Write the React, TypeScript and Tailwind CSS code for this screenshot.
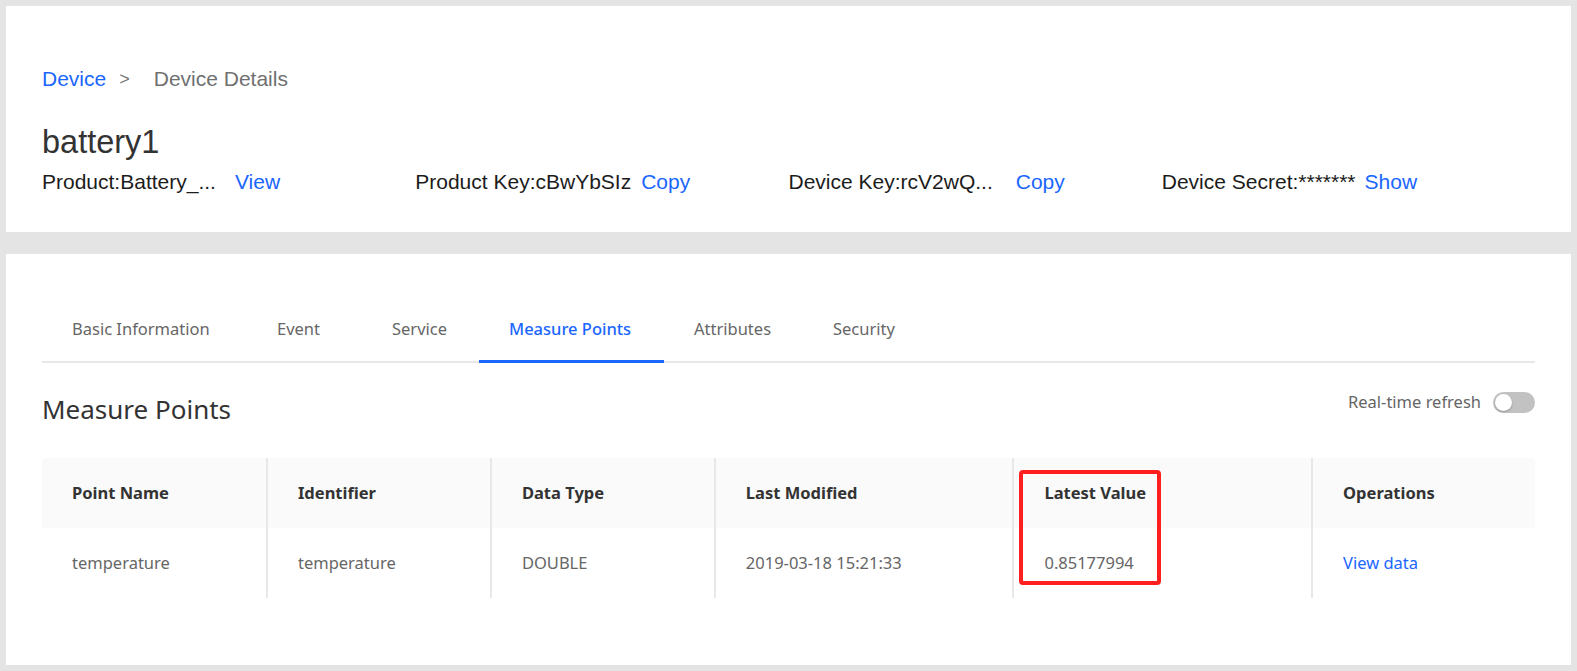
import { ReactElement } from 'react'

const tabs = [
	{ name: 'Basic Information', width: 'w-[205px]' },
	{ name: 'Event', width: 'w-[115px]' },
	{ name: 'Service', width: 'w-[117px]' },
	{ name: 'Measure Points', width: 'w-[185px]' },
	{ name: 'Attributes', width: 'w-[139px]' },
	{ name: 'Security', width: 'w-[139px]' },
]

const headers = ['Point Name', 'Identifier', 'Data Type', 'Last Modified', 'Latest Value', 'Operations']

const row = ['temperature', 'temperature', 'DOUBLE', '2019-03-18 15:21:33', '0.85177994']

const InfoItem = ({ label, action, gap }: { label: string; action: string; gap: string }): ReactElement => (
	<div className="flex items-center whitespace-nowrap">
		<span className={`text-[#1c1c1c] ${gap}`}>{label}</span>
		<a href="/" className="text-[#1a66ff]">
			{action}
		</a>
	</div>
)

const App = (): ReactElement => (
	<div className="min-h-screen bg-[#e4e4e4] p-[6px] flex flex-col gap-[22px]">
		<div className="bg-white px-[36px] pt-[61px] pb-[38px] font-['Liberation_Sans',Arial,sans-serif]">
			<div className="flex items-center text-[21px] leading-[24px]">
				<a href="/" className="text-[#1a66ff]">
					Device
				</a>
				<span className="ml-[13px] mr-[24px] text-[#777] text-[18px]">&gt;</span>
				<span className="text-[#707070]">Device Details</span>
			</div>
			<h1 className="mt-[32px] text-[32.5px] leading-[38px] text-[#333]">battery1</h1>
			<div className="mt-[9px] grid grid-cols-4 text-[21px] leading-[24px]">
				<InfoItem label="Product:Battery_..." action="View" gap="mr-[19px]" />
				<InfoItem label="Product Key:cBwYbSIz" action="Copy" gap="mr-[10px]" />
				<InfoItem label="Device Key:rcV2wQ..." action="Copy" gap="mr-[23px]" />
				<InfoItem label="Device Secret:*******" action="Show" gap="mr-[9px]" />
			</div>
		</div>

		<div className="flex-1 bg-white px-[36px] pt-[63px] pb-[67px] font-['Noto_Sans',sans-serif] text-[16.5px]">
			<div className="flex border-b-2 border-[#e8e8e8]">
				{tabs.map((tab) => (
					<div
						key={tab.name}
						className={`${tab.width} -mb-[2px] pl-[30px] pb-[19px] leading-[24px] whitespace-nowrap border-b-[3px] ${
							tab.name === 'Measure Points'
								? 'border-[#1a66ff] text-[#1a66ff] font-medium'
								: 'border-transparent text-[#666]'
						}`}
					>
						{tab.name}
					</div>
				))}
			</div>

			<div className="mt-[27px] flex justify-between items-start">
				<h2 className="mt-[3px] text-[26px] leading-[32px] text-[#333]">Measure Points</h2>
				<div className="flex items-center h-[24px] gap-[12px]">
					<span className="text-[#666]">Real-time refresh</span>
					<span className="relative w-[42px] h-[21px] rounded-full bg-[#c2c2c2]">
						<span className="absolute left-[2px] top-[2px] w-[17px] h-[17px] rounded-full bg-white shadow-[0_1px_2px_rgba(0,0,0,0.25)]" />
					</span>
				</div>
			</div>

			<div className="relative mt-[33px]">
				<div className="grid grid-cols-[3fr_3fr_3fr_4fr_4fr_3fr]">
					{headers.map((h, i) => (
						<div
							key={h}
							className={`h-[70px] flex items-center px-[30px] bg-[#fafafa] font-bold text-[#333] ${
								i > 0 ? 'border-l-2 border-[#e8e8e8]' : ''
							} ${i === 0 ? 'rounded-tl-[4px]' : ''} ${i === 5 ? 'rounded-tr-[4px]' : ''}`}
						>
							{h}
						</div>
					))}
					{row.map((v, i) => (
						<div
							key={i}
							className={`h-[70px] flex items-center px-[30px] text-[#666] ${
								i > 0 ? 'border-l-2 border-[#e8e8e8]' : ''
							}`}
						>
							{v}
						</div>
					))}
					<div className="h-[70px] flex items-center px-[30px] border-l-2 border-[#e8e8e8]">
						<a href="/" className="text-[#1a66ff]">
							View data
						</a>
					</div>
				</div>
				<div className="absolute left-[977px] top-[12px] w-[142px] h-[115px] rounded-[4px] border-4 border-[#ff1f1f] pointer-events-none" />
			</div>
		</div>
	</div>
)

export default App
